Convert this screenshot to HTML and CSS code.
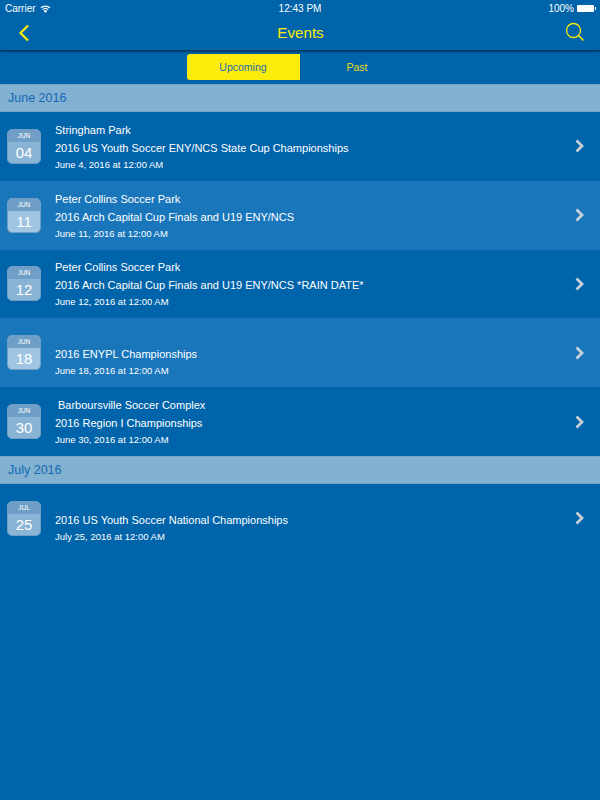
FILE: index.html
```html
<!DOCTYPE html>
<html lang="en">

<head>
    <meta charset="UTF-8">
    <meta name="viewport" content="width=device-width, initial-scale=1.0">
    <title>Events</title>
    <link rel="stylesheet" href="styles.css">
</head>

<body>

    <div class="top-bar">
        <div class="status-bar">
            <div class="status-left">
                <span>Carrier</span>
                <svg class="wifi" width="11" height="8" viewBox="0 0 11 8">
                    <path d="M5.5 8 3.6 5.8a2.8 2.8 0 0 1 3.8 0Z" fill="#fff"/>
                    <path d="M2.6 4.6a4.3 4.3 0 0 1 5.8 0M1 2.8a6.6 6.6 0 0 1 9 0" fill="none" stroke="#fff" stroke-width="1.2"/>
                </svg>
            </div>
            <div class="status-time">12:43 PM</div>
            <div class="status-right">
                <span>100%</span>
                <span class="battery"></span>
                <span class="battery-tip"></span>
            </div>
        </div>
        <div class="nav-bar">
            <svg class="back-icon" width="12" height="18" viewBox="0 0 12 18">
                <path d="M10 1.5 2.500 9l7.500 7.500" fill="none" stroke="#fbec0c" stroke-width="2.200"/>
            </svg>
            <h1>Events</h1>
            <svg class="search-icon" width="20" height="20" viewBox="0 0 20 20">
                <circle cx="8.500" cy="8.500" r="7" fill="none" stroke="#fbec0c" stroke-width="1.300"/>
                <path d="M13.500 13.500 18.500 18.500" fill="none" stroke="#fbec0c" stroke-width="1.500"/>
            </svg>
        </div>
    </div>

    <div class="tabs">
        <div class="tab active">Upcoming</div>
        <div class="tab">Past</div>
    </div>

    <div class="section-title">June 2016</div>

    <div class="event">
        <div class="date-box"><div class="month">JUN</div><div class="day">04</div></div>
        <div class="event-text">
            <div class="line">Stringham Park</div>
            <div class="line">2016 US Youth Soccer ENY/NCS State Cup Championships</div>
            <div class="when">June 4, 2016 at 12:00 AM</div>
        </div>
        <svg class="arrow" width="9" height="14" viewBox="0 0 9 14"><path d="M1.500 1.500 7 7l-5.500 5.500" fill="none" stroke="#c5d0da" stroke-width="2.800"/></svg>
    </div>

    <div class="event light">
        <div class="date-box"><div class="month">JUN</div><div class="day">11</div></div>
        <div class="event-text">
            <div class="line">Peter Collins Soccer Park</div>
            <div class="line">2016 Arch Capital Cup Finals and U19 ENY/NCS</div>
            <div class="when">June 11, 2016 at 12:00 AM</div>
        </div>
        <svg class="arrow" width="9" height="14" viewBox="0 0 9 14"><path d="M1.500 1.500 7 7l-5.500 5.500" fill="none" stroke="#c5d0da" stroke-width="2.800"/></svg>
    </div>

    <div class="event">
        <div class="date-box"><div class="month">JUN</div><div class="day">12</div></div>
        <div class="event-text">
            <div class="line">Peter Collins Soccer Park</div>
            <div class="line">2016 Arch Capital Cup Finals and U19 ENY/NCS *RAIN DATE*</div>
            <div class="when">June 12, 2016 at 12:00 AM</div>
        </div>
        <svg class="arrow" width="9" height="14" viewBox="0 0 9 14"><path d="M1.500 1.500 7 7l-5.500 5.500" fill="none" stroke="#c5d0da" stroke-width="2.800"/></svg>
    </div>

    <div class="event light">
        <div class="date-box"><div class="month">JUN</div><div class="day">18</div></div>
        <div class="event-text">
            <div class="line">&nbsp;</div>
            <div class="line">2016 ENYPL Championships</div>
            <div class="when">June 18, 2016 at 12:00 AM</div>
        </div>
        <svg class="arrow" width="9" height="14" viewBox="0 0 9 14"><path d="M1.500 1.500 7 7l-5.500 5.500" fill="none" stroke="#c5d0da" stroke-width="2.800"/></svg>
    </div>

    <div class="event">
        <div class="date-box"><div class="month">JUN</div><div class="day">30</div></div>
        <div class="event-text">
            <div class="line indent">Barboursville Soccer Complex</div>
            <div class="line">2016 Region I Championships</div>
            <div class="when">June 30, 2016 at 12:00 AM</div>
        </div>
        <svg class="arrow" width="9" height="14" viewBox="0 0 9 14"><path d="M1.500 1.500 7 7l-5.500 5.500" fill="none" stroke="#c5d0da" stroke-width="2.800"/></svg>
    </div>

    <div class="section-title">July 2016</div>

    <div class="event">
        <div class="date-box"><div class="month">JUL</div><div class="day">25</div></div>
        <div class="event-text">
            <div class="line">&nbsp;</div>
            <div class="line">2016 US Youth Soccer National Championships</div>
            <div class="when">July 25, 2016 at 12:00 AM</div>
        </div>
        <svg class="arrow" width="9" height="14" viewBox="0 0 9 14"><path d="M1.500 1.500 7 7l-5.500 5.500" fill="none" stroke="#c5d0da" stroke-width="2.800"/></svg>
    </div>

</body>

</html>
```

FILE: styles.css
```css
body {
    font-family: "Liberation Sans", Arial, sans-serif;
    margin: 0;
    padding: 0;
    height: 800px;
    overflow: hidden;
    background-color: #0064aa;
    color: #fff;
}

.top-bar {
    height: 50px;
    box-shadow: 0 1px 3px rgba(0, 0, 0, 0.7);
}

.status-bar {
    height: 17px;
    padding: 0 5px;
    display: flex;
    align-items: center;
    justify-content: space-between;
    font-size: 10px;
}

.status-left {
    width: 120px;
    display: flex;
    align-items: center;
    gap: 4px;
}

.status-right {
    width: 120px;
    display: flex;
    align-items: center;
    justify-content: flex-end;
}

.battery {
    width: 17px;
    height: 7px;
    margin-left: 3px;
    background-color: #fff;
    border-radius: 1px;
}

.battery-tip {
    width: 1px;
    height: 3px;
    margin-left: 1px;
    margin-right: -1px;
    background-color: #fff;
}

.nav-bar {
    height: 31px;
    padding: 0 15px 2px 18px;
    display: flex;
    align-items: center;
    justify-content: space-between;
}

.nav-bar h1 {
    margin: 0 0 0 6px;
    font-size: 15.2px;
    font-weight: normal;
    color: #fbec0c;
}

.search-icon {
    margin-top: -2px;
}

.tabs {
    margin-top: 4px;
    height: 26px;
    display: flex;
    justify-content: center;
}

.tab {
    width: 113px;
    text-align: center;
    line-height: 26px;
    font-size: 10.5px;
    color: #e6da20;
}

.tab.active {
    background-color: #fbec0c;
    color: #2a6cb0;
    border-radius: 3px 0 0 3px;
    border-right: 1px solid #0a55b5;
}

.section-title {
    margin-top: 4px;
    height: 28px;
    line-height: 27px;
    padding-left: 8px;
    font-size: 12.5px;
    color: #1268b4;
    background-color: #82b1d2;
    border-top: 1px solid #6fa3cc;
    border-bottom: 1px solid #6fa3cc;
    box-sizing: border-box;
}

.event + .section-title {
    margin-top: 0;
}

.event {
    height: 68.8px;
    display: flex;
    align-items: center;
    padding: 0 16px 0 7px;
    box-sizing: border-box;
}

.event.light {
    background-color: #1976bb;
}

.date-box {
    width: 34px;
    height: 35px;
    border-radius: 5px;
    border: 1px solid #6f9fc6;
    box-sizing: border-box;
    overflow: hidden;
    background-color: #a0c5e3;
    text-align: center;
    flex-shrink: 0;
}

.event:not(.light) .date-box {
    background-color: #8ab4d6;
}

.month {
    height: 12px;
    line-height: 12px;
    font-size: 6.5px;
    background-color: #6f9fc6;
}

.day {
    line-height: 22px;
    font-size: 15px;
}

.event-text {
    flex: 1;
    margin: 1px 0 0 14px;
    font-size: 11px;
}

.line {
    line-height: 18px;
}

.indent {
    padding-left: 3px;
}

.when {
    line-height: 16px;
    font-size: 9.5px;
}
```
